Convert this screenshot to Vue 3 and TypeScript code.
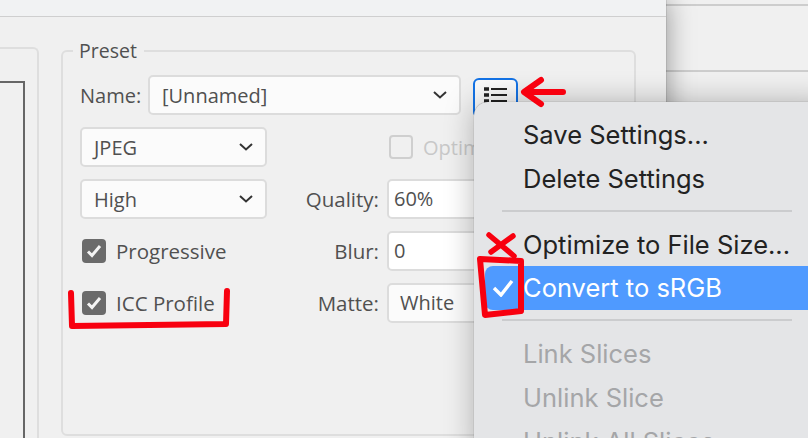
<script setup lang="ts">
const rightFields = [
  { label: 'Quality:', value: '60%', kind: 'white' },
  { label: 'Blur:', value: '0', kind: 'white' },
  { label: 'Matte:', value: 'White', kind: 'plain' },
];
</script>

<template>
  <div class="page">
    <div class="dialog">
      <div class="strip"></div>
      <div class="body">
        <div class="side-panel">
          <div class="side-box"></div>
        </div>
        <fieldset class="preset">
          <legend>Preset</legend>
          <div class="name-row">
            <span class="name-label">Name:</span>
            <div class="select name-select">
              <span>[Unnamed]</span>
              <svg class="chev" width="14" height="8" viewBox="0 0 14 8"><path d="M1 1l6 5.5L13 1" /></svg>
            </div>
            <button class="list-btn">
              <svg width="24" height="20" viewBox="0 0 24 20">
                <path d="M0 3h5M0 9h5M0 15h5" stroke="#222" stroke-width="3.4" />
                <path d="M7 3h16M7 9h16M7 15h16" stroke="#222" stroke-width="2.2" />
              </svg>
            </button>
          </div>
          <div class="columns">
            <div class="col-left">
              <div class="select">
                <span>JPEG</span>
                <svg class="chev" width="14" height="8" viewBox="0 0 14 8"><path d="M1 1l6 5.5L13 1" /></svg>
              </div>
              <div class="select">
                <span>High</span>
                <svg class="chev" width="14" height="8" viewBox="0 0 14 8"><path d="M1 1l6 5.5L13 1" /></svg>
              </div>
              <div class="check-row">
                <span class="box"><svg width="16" height="14" viewBox="0 0 16 14"><path d="M2 7.5l4 4L14 2" /></svg></span>
                <span>Progressive</span>
              </div>
              <div class="check-row">
                <span class="box"><svg width="16" height="14" viewBox="0 0 16 14"><path d="M2 7.5l4 4L14 2" /></svg></span>
                <span>ICC Profile</span>
              </div>
            </div>
            <div class="col-right">
              <div class="optimized">
                <span class="box-off"></span>
                <span>Optimized</span>
              </div>
              <div v-for="f in rightFields" :key="f.label" class="field">
                <span class="field-label">{{ f.label }}</span>
                <div class="input" :class="f.kind">{{ f.value }}</div>
              </div>
            </div>
          </div>
        </fieldset>
      </div>
    </div>
    <div class="desktop">
      <div class="line first"></div>
      <div class="line second"></div>
    </div>

    <div class="menu">
      <div class="item">Save Settings...</div>
      <div class="item">Delete Settings</div>
      <div class="sep"></div>
      <div class="item">Optimize to File Size...</div>
      <div class="item active">
        <svg class="tick" width="22" height="18" viewBox="0 0 22 18"><path d="M2 9l7 7L20 2" /></svg>
        Convert to sRGB
      </div>
      <div class="sep"></div>
      <div class="item off">Link Slices</div>
      <div class="item off">Unlink Slice</div>
      <div class="item off">Unlink All Slices</div>
    </div>

    <svg class="marks" width="808" height="438" viewBox="0 0 808 438">
      <path d="M563 92H525M541 80L524 92L541 104" stroke-width="6" />
      <path d="M489 235L514 256M513 236L491 252" stroke-width="5.5" />
      <path d="M480 259L521 261L521 311L485 315Z" stroke-width="6" />
      <path d="M71 293L72 326L226 324L227 291" stroke-width="6" />
    </svg>
  </div>
</template>

<style>
html, body { margin: 0; padding: 0; background: #f0f0f0; }
</style>

<style scoped>
.page {
  position: relative;
  display: flex;
  width: 808px;
  height: 438px;
  overflow: hidden;
  font-family: "Open Sans", "Noto Sans", sans-serif;
  color: #505050;
}
.dialog {
  position: relative;
  z-index: 1;
  display: flex;
  flex-direction: column;
  width: 666px;
  flex: none;
  background: #f0f0f0;
  box-shadow: 0 0 26px rgba(0, 0, 0, 0.4), 0 0 1px rgba(0, 0, 0, 0.5);
}
.strip {
  height: 16px;
  flex: none;
  background: #f1f2f3;
  border-bottom: 1px solid #cfcfcf;
}
.body {
  display: flex;
  flex: 1;
  min-height: 0;
}
.side-panel {
  width: 39px;
  height: 460px;
  flex: none;
  box-sizing: border-box;
  margin-top: 30px;
  padding-top: 32px;
  border-top: 2px solid #dedede;
  border-right: 2px solid #dedede;
  border-top-right-radius: 6px;
}
.side-box {
  width: 25px;
  height: 400px;
  box-sizing: border-box;
  border-top: 2px solid #666;
  border-right: 2px solid #666;
}
.preset {
  width: 575px;
  height: 397px;
  flex: none;
  box-sizing: border-box;
  margin: 22px 0 0 22px;
  padding: 0 18px 0 17px;
  border: 2px solid #dedede;
  border-radius: 6px;
  min-width: 0;
}
legend {
  margin-left: -7px;
  padding: 0 7px 0 6px;
  font-size: 19.5px;
  line-height: 24px;
  color: #505050;
}
.name-row {
  display: flex;
  align-items: flex-start;
  margin-top: 12px;
  height: 40px;
}
.name-label {
  width: 68px;
  flex: none;
  font-size: 20px;
  line-height: 42px;
}
.select {
  display: flex;
  align-items: center;
  justify-content: space-between;
  box-sizing: border-box;
  height: 40px;
  padding: 0 12px 0 12px;
  background: #fbfbfb;
  border: 2px solid #dcdcdc;
  border-radius: 5px;
  font-size: 20px;
}
.name-select {
  width: 313px;
  flex: none;
}
.chev {
  fill: none;
  stroke: #333;
  stroke-width: 2;
}
.list-btn {
  width: 45px;
  height: 40px;
  flex: none;
  box-sizing: border-box;
  margin: 3px 0 0 12px;
  padding: 0 0 2px 0;
  background: #fafafa;
  border: 2px solid #1473e6;
  border-radius: 6px;
}
.columns {
  display: flex;
  margin-top: 12px;
}
.col-left {
  display: flex;
  flex-direction: column;
  gap: 12px;
  width: 187px;
  flex: none;
}
.check-row {
  display: flex;
  align-items: center;
  gap: 10px;
  height: 40px;
  font-size: 20.5px;
  padding-left: 2px;
}
.box {
  display: flex;
  align-items: center;
  justify-content: center;
  width: 24px;
  height: 24px;
  border-radius: 4px;
  background: #6b6b6b;
}
.box svg {
  fill: none;
  stroke: #f4f4f4;
  stroke-width: 3;
}
.col-right {
  display: flex;
  flex-direction: column;
  gap: 12px;
  flex: 1;
}
.optimized {
  display: flex;
  align-items: center;
  gap: 10px;
  height: 40px;
  padding-left: 122px;
  font-size: 20px;
  color: #c8c8c8;
}
.box-off {
  width: 24px;
  height: 24px;
  box-sizing: border-box;
  border: 2px solid #cfcfcf;
  border-radius: 4px;
}
.field {
  display: flex;
  align-items: center;
  height: 40px;
}
.field-label {
  width: 112px;
  flex: none;
  text-align: right;
  font-size: 20.5px;
}
.input {
  margin-left: 8px;
  width: 200px;
  height: 40px;
  box-sizing: border-box;
  line-height: 36px;
  font-size: 20px;
  border: 2px solid #dcdcdc;
  border-radius: 5px;
}
.input.white {
  padding: 0 5px;
  background: #fff;
}
.input.plain {
  padding: 0 11px;
  background: #fbfbfb;
}
.desktop {
  position: relative;
  flex: 1;
  background: #f0f0f0;
}
.line {
  height: 2px;
  background: #cdcdcd;
}
.line.first {
  margin-top: 4px;
}
.line.second {
  margin-top: 64px;
}
.menu {
  position: absolute;
  z-index: 2;
  left: 474px;
  top: 102px;
  width: 360px;
  height: 360px;
  box-sizing: border-box;
  padding-top: 11px;
  background: #e4e5e7;
  border-radius: 14px;
  box-shadow: 0 0 30px rgba(0, 0, 0, 0.28), 0 0 1px rgba(0, 0, 0, 0.5);
  font-family: Inter, "Noto Sans", sans-serif;
  font-size: 25.5px;
  color: #222;
}
.item {
  position: relative;
  height: 44px;
  line-height: 44px;
  margin-left: 11px;
  padding-left: 38px;
  border-radius: 8px;
}
.item.active {
  margin-top: -1px;
  margin-bottom: 1px;
  background: #4f9aff;
  color: #fff;
}
.item.off {
  color: #a5a6a8;
}
.tick {
  position: absolute;
  left: 7px;
  top: 13px;
  fill: none;
  stroke: #fff;
  stroke-width: 3.4;
}
.sep {
  height: 2px;
  width: 290px;
  margin: 9px 0 11px 28px;
  background: #cbccce;
}
.marks {
  position: absolute;
  z-index: 3;
  left: 0;
  top: 0;
  fill: none;
  stroke: #f8000f;
  stroke-linecap: round;
  stroke-linejoin: round;
  pointer-events: none;
}
</style>
